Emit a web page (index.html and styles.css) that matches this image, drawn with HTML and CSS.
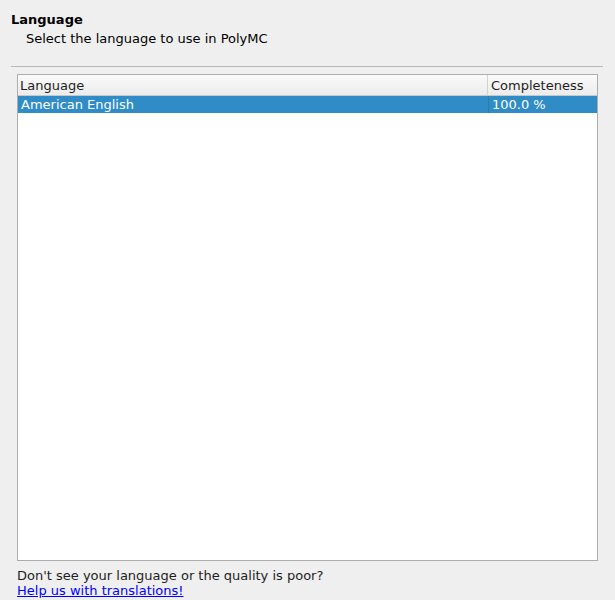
FILE: index.html
```html
<!DOCTYPE html>
<html>
<head>
<meta charset="utf-8">
<link rel="stylesheet" href="styles.css">
</head>
<body>
<div class="page">
  <header class="head">
    <div class="title">Language</div>
    <div class="subtitle">Select the language to use in PolyMC</div>
  </header>
  <div class="sep"></div>
  <div class="content">
    <div class="table">
      <div class="row header">
        <div class="cell c1">Language</div>
        <div class="cell c2">Completeness</div>
      </div>
      <div class="row selected">
        <div class="cell c1">American English</div>
        <div class="cell c2">100.0 %</div>
      </div>
    </div>
    <div class="footer">
      <div>Don't see your language or the quality is poor?</div>
      <a href="#" class="link">Help us with translations!</a>
    </div>
  </div>
</div>
</body>
</html>
```
FILE: styles.css
```css
html, body {
  margin: 0;
  padding: 0;
  background: #efefef;
}
body {
  font-family: "DejaVu Sans", sans-serif;
  font-size: 13px;
  color: #000;
  width: 615px;
  height: 600px;
  overflow: hidden;
}
.page {
  display: flex;
  flex-direction: column;
  height: 600px;
}
.head {
  padding: 11px 11px 0 11px;
  height: 55px;
  box-sizing: border-box;
}
.title {
  font-weight: bold;
  line-height: 17px;
}
.subtitle {
  padding-left: 15px;
  line-height: 17px;
  margin-top: 2px;
}
.sep {
  margin: 11px 12px 0 11px;
  height: 1px;
  background: #b9b9b9;
}
.content {
  flex: 1;
  padding: 7px 17px 0 17px;
  display: flex;
  flex-direction: column;
}
.table {
  height: 487px;
  border: 1px solid #adadad;
  background: #fff;
  box-sizing: border-box;
}
.row {
  display: flex;
}
.cell {
  padding: 0 3px;
  white-space: nowrap;
}
.c1 {
  width: 464px;
  border-right: 1px solid #d2d2d2;
}
.c2 {
  flex: 1;
  padding-left: 3px;
}
.header {
  height: 21px;
  line-height: 22px;
  background: linear-gradient(#fafafa, #ececec);
  border-bottom: 1px solid #c8c8c8;
  box-sizing: border-box;
  color: #1e1e1e;
}
.header .c1 {
  padding-left: 2px;
}
.selected {
  height: 17px;
  line-height: 17px;
  background: #308cc6;
  color: #fff;
}
.selected .c1 {
  border-right-color: #2a7bb0;
}
.footer {
  margin-top: 7px;
  line-height: 15px;
  color: #1e1e1e;
}
.link {
  color: #0000ff;
  text-decoration: underline;
}
```
